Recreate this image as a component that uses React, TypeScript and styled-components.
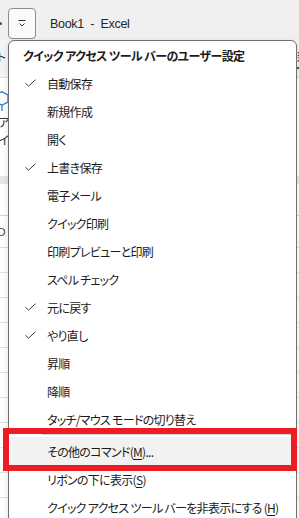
import React from "react";
import styled, { createGlobalStyle } from "styled-components";

const GlobalStyle = createGlobalStyle`
  html, body {
    margin: 0;
    padding: 0;
    background: #ffffff;
  }
  * {
    box-sizing: border-box;
  }
`;

const jp = `"Noto Sans CJK JP", "Noto Sans", sans-serif`;

type Item = {
  label: React.ReactNode;
  checked?: boolean;
};

const items: Item[] = [
  { label: "自動保存", checked: true },
  { label: "新規作成" },
  { label: "開く" },
  { label: "上書き保存", checked: true },
  { label: "電子メール" },
  { label: "クイック印刷" },
  { label: "印刷プレビューと印刷" },
  { label: "スペル チェック" },
  { label: "元に戻す", checked: true },
  { label: "やり直し", checked: true },
  { label: "昇順" },
  { label: "降順" },
  { label: "タッチ/マウス モードの切り替え" },
];

const Check = () => (
  <svg width="11" height="8" viewBox="0 0 11 8">
    <path d="M0.5 4.2 L3.6 7.2 L10.5 0.6" fill="none" stroke="#3a3a3a" strokeWidth="1" />
  </svg>
);

const QatGlyph = () => (
  <svg width="8" height="7" viewBox="0 0 8 7">
    <path d="M0.5 0.5 H7.5" stroke="#333" strokeWidth="1" />
    <path d="M1.5 3.5 L4 6 L6.5 3.5" fill="none" stroke="#333" strokeWidth="1" />
  </svg>
);

const Hexagon = () => (
  <svg width="10" height="22" viewBox="0 0 10 22">
    <path d="M-6 4 L2 0.8 L8 4 L8 11 L2 14 L-6 11 Z" fill="none" stroke="#2b7cd3" strokeWidth="1.3" />
    <path d="M2 14 L2 20" stroke="#2b7cd3" strokeWidth="1.3" />
  </svg>
);

const App = () => {
  return (
    <>
      <GlobalStyle />
      <Window>
        <TitleBar>
          <Dot />
          <QatButton>
            <QatGlyph />
          </QatButton>
          <Title>{"Book1  -  Excel"}</Title>
        </TitleBar>
        <TabRow>
          <TabText>ト</TabText>
          <TabText $active>新規</TabText>
        </TabRow>
        <Ribbon>
          <Hexagon />
          <RibbonText>ア</RibbonText>
          <RibbonText>イ</RibbonText>
        </Ribbon>
        <Band />
        <FormulaBar />
        <HeaderRow>
          <CellText>O</CellText>
        </HeaderRow>
        {Array.from({ length: 11 }).map((_, i) => (
          <SheetRow key={i} />
        ))}

        <Menu>
          <MenuHeader>クイック アクセス ツール バーのユーザー設定</MenuHeader>
          {items.map((item, i) => (
            <Row key={i}>
              <CheckCell>{item.checked && <Check />}</CheckCell>
              <Label>{item.label}</Label>
            </Row>
          ))}
          <Separator />
          <Row $hover>
            <CheckCell />
            <Label>
              その他のコマンド(<u>M</u>)...
            </Label>
          </Row>
          <Row>
            <CheckCell />
            <Label>
              リボンの下に表示(<u>S</u>)
            </Label>
          </Row>
          <Row>
            <CheckCell />
            <Label>
              クイック アクセス ツール バーを非表示にする (<u>H</u>)
            </Label>
          </Row>
        </Menu>
        <Callout />
      </Window>
    </>
  );
};

const Window = styled.div`
  position: relative;
  width: 299px;
  height: 518px;
  overflow: hidden;
  background: #ffffff;
  display: flex;
  flex-direction: column;
`;

const TitleBar = styled.div`
  height: 40px;
  flex-shrink: 0;
  display: flex;
  align-items: center;
  padding: 8px 0 1px 0;
  background: #f0f0f0;
`;

const Dot = styled.div`
  width: 2px;
  height: 3px;
  margin-right: 6px;
  background: #555;
  border-radius: 0 2px 2px 0;
`;

const QatButton = styled.div`
  width: 28px;
  height: 31px;
  display: flex;
  align-items: center;
  justify-content: center;
  border: 1px solid #8d8d8d;
  border-radius: 4px;
  background: #fafafa;
`;

const Title = styled.div`
  margin-left: 14px;
  white-space: pre;
  font-family: "Liberation Sans", Arial, sans-serif;
  font-size: 12.5px;
  letter-spacing: -0.3px;
  color: #262626;
`;

const TabRow = styled.div`
  height: 38px;
  flex-shrink: 0;
  display: flex;
  align-items: center;
  justify-content: space-between;
  overflow: hidden;
  background: #f3f3f3;
  border-bottom: 1px solid #e0e0e0;
  font-family: ${jp};
  font-size: 12px;
  color: #333;
`;

const TabText = styled.span<{ $active?: boolean }>`
  margin: ${(p) => (p.$active ? "0 -22px 0 0" : "0 0 0 -5px")};
  padding-bottom: 2px;
  border-bottom: 2px solid ${(p) => (p.$active ? "#1d7044" : "transparent")};
`;

const Ribbon = styled.div`
  height: 98px;
  flex-shrink: 0;
  display: flex;
  flex-direction: column;
  padding-top: 13px;
  overflow: hidden;
  font-family: ${jp};
  font-size: 12px;
  color: #333;
`;

const RibbonText = styled.span`
  margin-left: -2px;
  line-height: 18px;
`;

const Band = styled.div`
  height: 8px;
  flex-shrink: 0;
  background: #e6e6e6;
`;

const FormulaBar = styled.div`
  height: 32px;
  flex-shrink: 0;
  border-bottom: 1px solid #d4d4d4;
`;

const HeaderRow = styled.div`
  height: 32px;
  flex-shrink: 0;
  display: flex;
  align-items: center;
  overflow: hidden;
  border-bottom: 1px solid #e0e0e0;
  font-family: "Liberation Sans", sans-serif;
  font-size: 11px;
  color: #444;
`;

const CellText = styled.span`
  margin-left: -3px;
`;

const SheetRow = styled.div`
  height: 25px;
  flex-shrink: 0;
  border-bottom: 1px solid #e2e2e2;
`;

const Menu = styled.div`
  position: absolute;
  left: 8px;
  top: 40px;
  width: 289px;
  height: 520px;
  background: #ffffff;
  border: 1px solid #707070;
  border-radius: 6px;
  box-shadow: 0 2px 6px rgba(0, 0, 0, 0.12);
  font-family: ${jp};
  font-size: 12px;
  font-feature-settings: "palt";
  letter-spacing: -0.7px;
  color: #1b1b1b;
`;

const MenuHeader = styled.div`
  height: 28px;
  display: flex;
  align-items: center;
  padding-left: 14px;
  font-weight: 700;
  letter-spacing: -0.6px;
  white-space: nowrap;
`;

const Row = styled.div<{ $hover?: boolean }>`
  height: 28px;
  display: flex;
  align-items: center;
  background: ${(p) => (p.$hover ? "#f2f2f2" : "transparent")};
`;

const CheckCell = styled.div`
  width: 38px;
  flex-shrink: 0;
  display: flex;
  align-items: center;
  padding-left: 16px;
`;

const Label = styled.span`
  white-space: nowrap;

  u {
    text-underline-offset: 2px;
  }
`;

const Separator = styled.div`
  height: 1px;
  margin: 1px 0 2px 33px;
  background: #d0d0d0;
`;

const Callout = styled.div`
  position: absolute;
  left: 3px;
  top: 428px;
  width: 294px;
  height: 43px;
  border: 6px solid #ed1c24;
`;

export default App;
